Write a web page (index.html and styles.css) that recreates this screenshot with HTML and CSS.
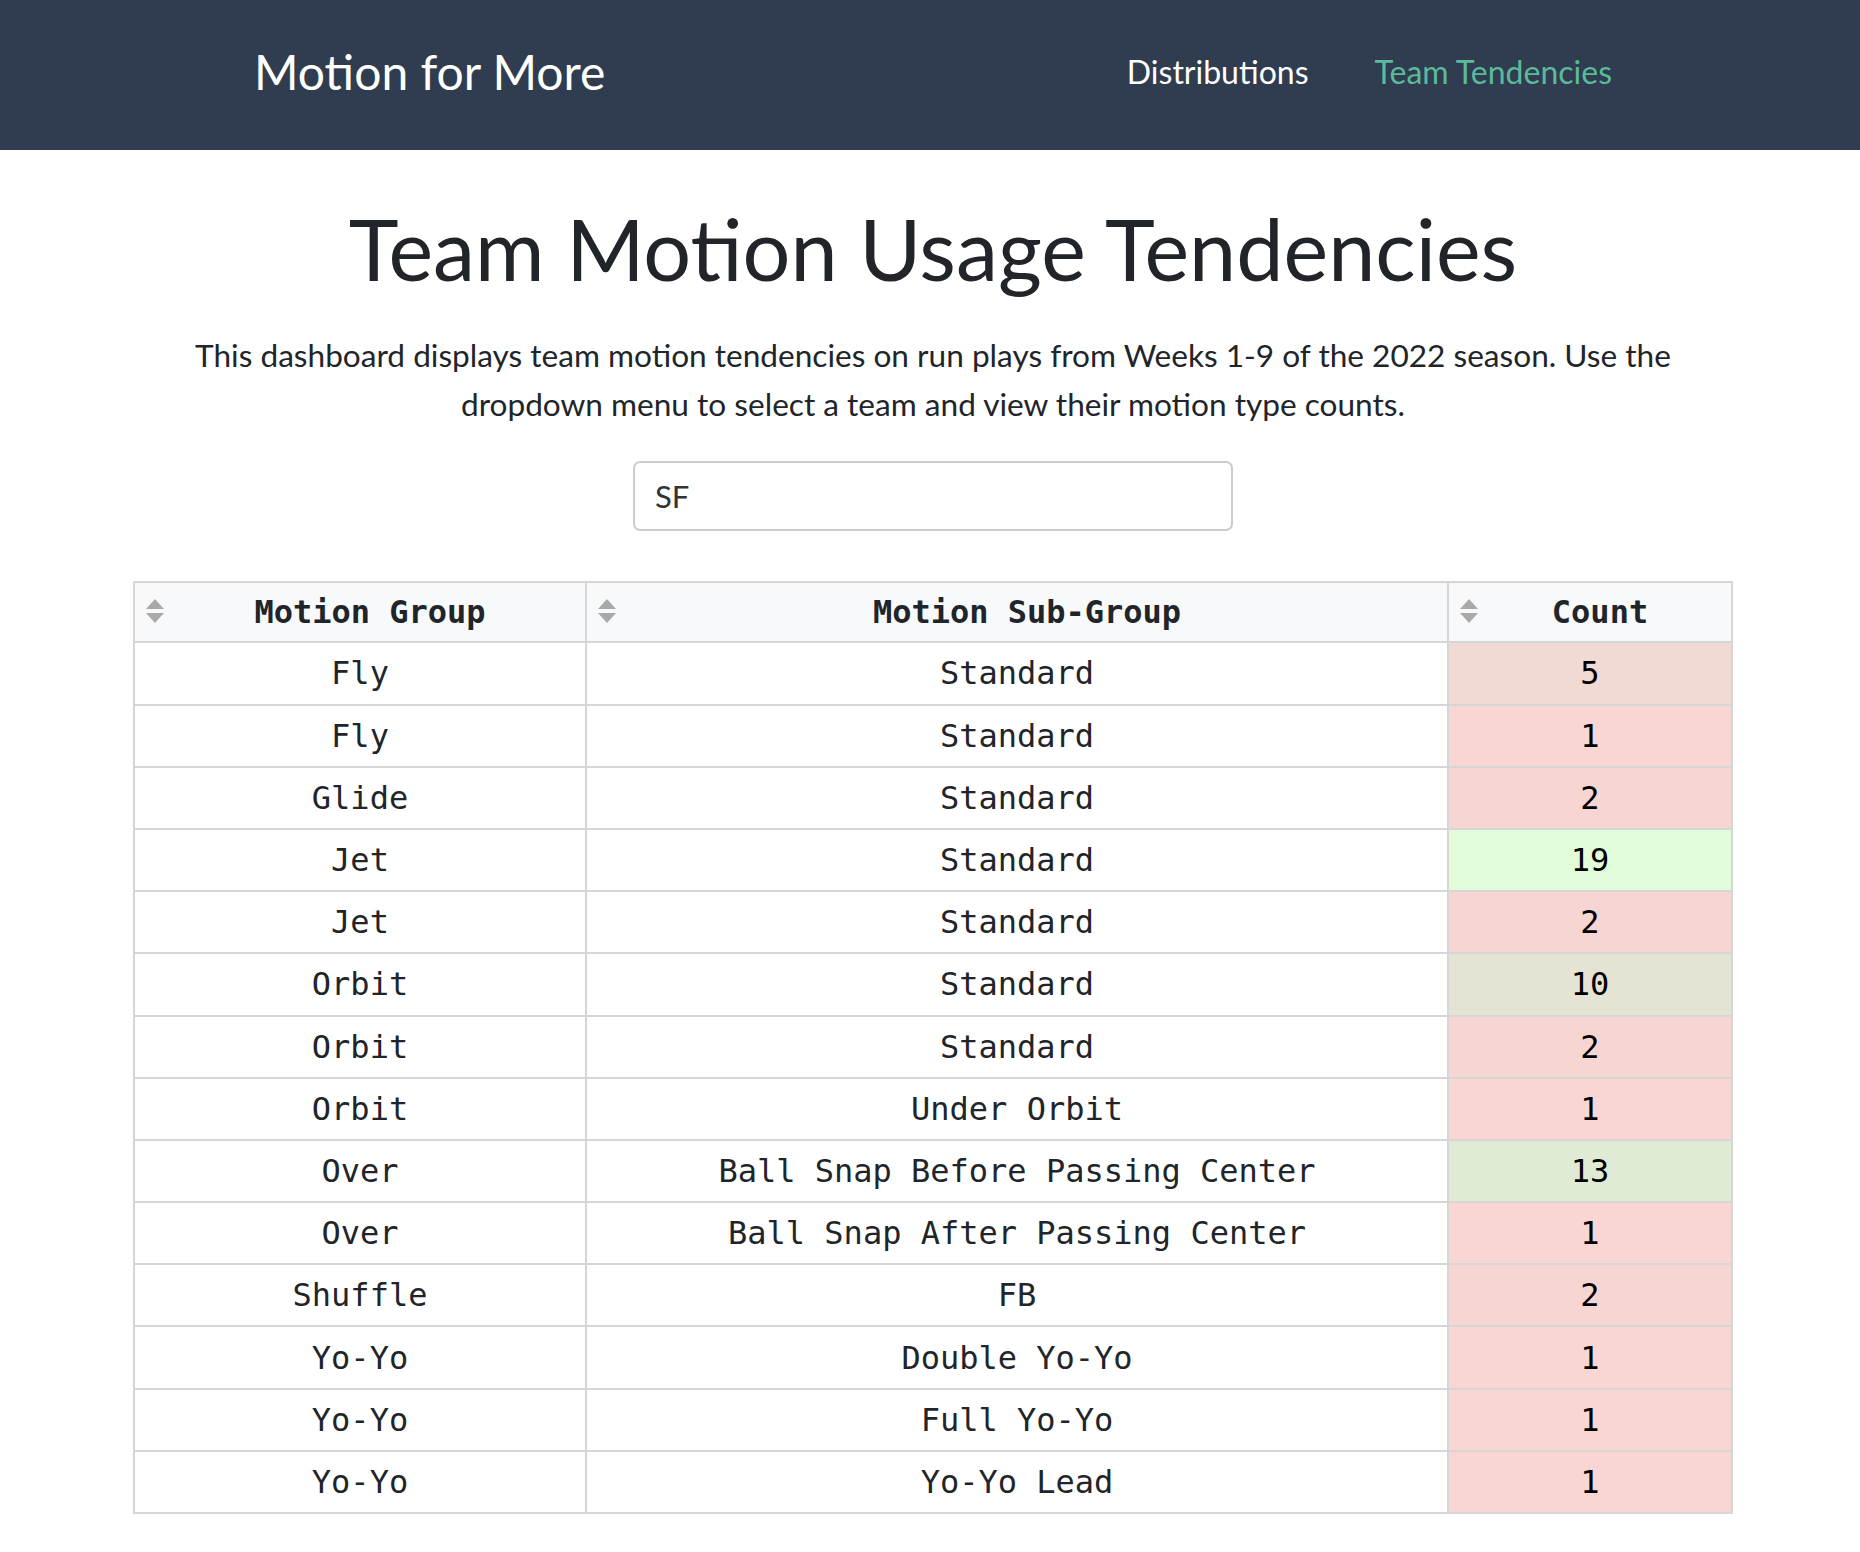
FILE: index.html
```html
<!DOCTYPE html>
<html lang="en">
<head>
<meta charset="utf-8">
<title>Motion for More - Team Tendencies</title>
<link rel="stylesheet" href="styles.css">
</head>
<body>
<nav class="navbar">
  <div class="navbar-inner">
    <a class="brand" href="#">Motion for More</a>
    <ul class="nav-links">
      <li><a class="nav-link" href="#">Distributions</a></li>
      <li><a class="nav-link active" href="#">Team Tendencies</a></li>
    </ul>
  </div>
</nav>
<main class="page">
  <h1 class="title">Team Motion Usage Tendencies</h1>
  <p class="lead">This dashboard displays team motion tendencies on run plays from Weeks 1-9 of the 2022 season. Use the dropdown menu to select a team and view their motion type counts.</p>
  <div class="select-wrap">
    <div class="select-box">SF</div>
  </div>
  <table class="data-table">
    <colgroup>
      <col class="col-group">
      <col class="col-sub">
      <col class="col-count">
    </colgroup>
    <thead>
      <tr>
        <th><span class="sort-icon"><svg width="18" height="26" viewBox="0 0 18 26"><path d="M9 1 L18 11 L0 11 Z" fill="#a9a9a9"/><path d="M0 15 L18 15 L9 25 Z" fill="#a9a9a9"/></svg></span>Motion Group</th>
        <th><span class="sort-icon"><svg width="18" height="26" viewBox="0 0 18 26"><path d="M9 1 L18 11 L0 11 Z" fill="#a9a9a9"/><path d="M0 15 L18 15 L9 25 Z" fill="#a9a9a9"/></svg></span>Motion Sub-Group</th>
        <th><span class="sort-icon"><svg width="18" height="26" viewBox="0 0 18 26"><path d="M9 1 L18 11 L0 11 Z" fill="#a9a9a9"/><path d="M0 15 L18 15 L9 25 Z" fill="#a9a9a9"/></svg></span>Count</th>
      </tr>
    </thead>
    <tbody>
      <tr><td>Fly</td><td>Standard</td><td class="count h5">5</td></tr>
      <tr><td>Fly</td><td>Standard</td><td class="count h1">1</td></tr>
      <tr><td>Glide</td><td>Standard</td><td class="count h2">2</td></tr>
      <tr><td>Jet</td><td>Standard</td><td class="count h19">19</td></tr>
      <tr><td>Jet</td><td>Standard</td><td class="count h2">2</td></tr>
      <tr><td>Orbit</td><td>Standard</td><td class="count h10">10</td></tr>
      <tr><td>Orbit</td><td>Standard</td><td class="count h2">2</td></tr>
      <tr><td>Orbit</td><td>Under Orbit</td><td class="count h1">1</td></tr>
      <tr><td>Over</td><td>Ball Snap Before Passing Center</td><td class="count h13">13</td></tr>
      <tr><td>Over</td><td>Ball Snap After Passing Center</td><td class="count h1">1</td></tr>
      <tr><td>Shuffle</td><td>FB</td><td class="count h2">2</td></tr>
      <tr><td>Yo-Yo</td><td>Double Yo-Yo</td><td class="count h1">1</td></tr>
      <tr><td>Yo-Yo</td><td>Full Yo-Yo</td><td class="count h1">1</td></tr>
      <tr><td>Yo-Yo</td><td>Yo-Yo Lead</td><td class="count h1">1</td></tr>
    </tbody>
  </table>
</main>
</body>
</html>
```

FILE: styles.css
```css
* { box-sizing: border-box; }

body {
  margin: 0;
  font-family: Lato, "Noto Sans", sans-serif;
  color: #212529;
  background: #ffffff;
}

.navbar {
  background: #303c4f;
  height: 150px;
  display: flex;
  align-items: center;
  padding-bottom: 7px;
}

.navbar-inner {
  flex: 1;
  display: flex;
  align-items: center;
  justify-content: space-between;
  padding: 0 248px 0 254px;
}

.brand {
  color: #ffffff;
  text-decoration: none;
  font-size: 48px;
  line-height: 1;
}

.nav-links {
  list-style: none;
  margin: 0;
  padding: 0;
  display: flex;
  gap: 66px;
}

.nav-link {
  color: #ffffff;
  text-decoration: none;
  font-size: 32px;
}

.nav-link.active {
  color: #5bba9a;
}

.page {
  width: 1600px;
  margin: 0 auto;
  position: relative;
  left: 3px;
  padding-bottom: 40px;
}

.title {
  font-family: Lato, sans-serif;
  font-weight: 400;
  font-size: 84.5px;
  line-height: 1.2;
  margin: 48px 0 0;
  text-align: center;
}

.lead {
  font-size: 31.6px;
  line-height: 48.5px;
  text-align: center;
  margin: 32px 0 0;
}

.select-wrap {
  display: flex;
  justify-content: center;
  margin-top: 33px;
}

.select-box {
  width: 600px;
  height: 70px;
  border: 2px solid #cccccc;
  border-radius: 7px;
  padding: 0 20px;
  display: flex;
  align-items: center;
  font-size: 31px;
  color: #333333;
  background: #ffffff;
}

.data-table {
  width: 1598px;
  margin-top: 50px;
  border-collapse: collapse;
  table-layout: fixed;
  font-family: "DejaVu Sans Mono", "Liberation Mono", monospace;
  font-size: 32px;
  border: 2px solid #d6d6d6;
}

.col-group { width: 452px; }
.col-sub { width: 862px; }
.col-count { width: 284px; }

.data-table th,
.data-table td {
  border: 2px solid #d6d6d6;
  text-align: center;
  white-space: nowrap;
}

.data-table th {
  position: relative;
  height: 60px;
  background: #f8f9fa;
  font-weight: 700;
  color: #212529;
  padding: 0 0 0 20px;
}

.data-table td {
  height: 62.2px;
  padding: 0;
  color: #212529;
}

.sort-icon {
  position: absolute;
  left: 11px;
  top: 50%;
  margin-top: -14px;
  width: 18px;
  height: 26px;
  display: block;
}

.sort-icon svg { display: block; }

.data-table td.count { color: #000000; }

.h1 { background: #f9d5d3; }
.h2 { background: #f7d5d3; }
.h5 { background: #f0dad3; }
.h10 { background: #e5e3d4; }
.h13 { background: #e0ebd6; }
.h19 { background: #e0fcd9; }
```
